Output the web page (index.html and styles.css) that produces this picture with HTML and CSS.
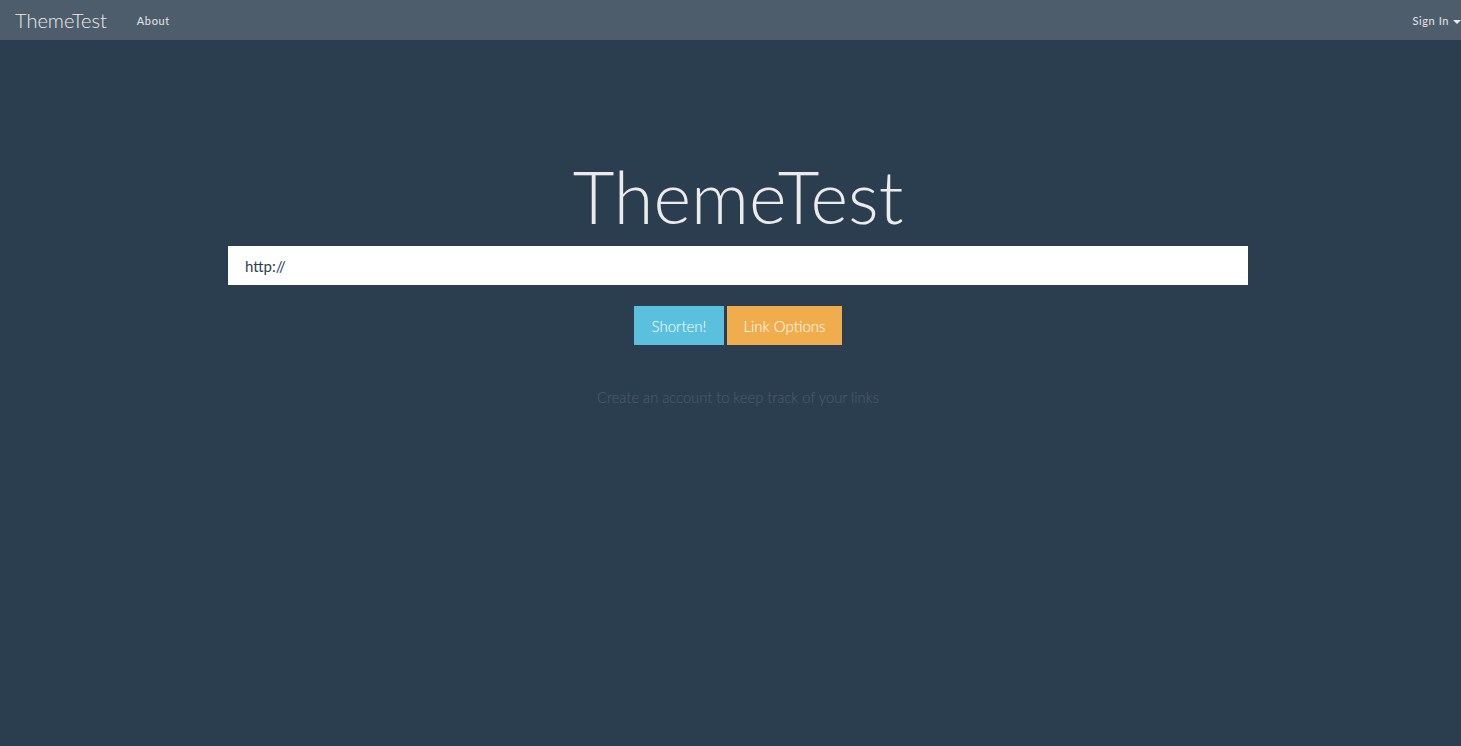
FILE: index.html
```html
<!DOCTYPE html>
<html lang="en">
<head>
    <meta charset="UTF-8">
    <meta name="viewport" content="width=device-width, initial-scale=1.0">
    <title>ThemeTest</title>
    <link rel="stylesheet" href="styles.css">
</head>
<body>
    <nav class="navbar">
        <a class="brand" href="#">ThemeTest</a>
        <ul class="nav">
            <li><a href="#">About</a></li>
        </ul>
        <ul class="nav nav-right">
            <li><a href="#">Sign In<span class="caret"></span></a></li>
        </ul>
    </nav>

    <div class="wrapper">
        <div class="container">
            <h1>ThemeTest</h1>
            <form id="shortenForm">
                <input type="text" class="url-input" value="http://">
                <div class="actions">
                    <button type="submit" class="btn btn-info">Shorten!</button>
                    <button type="button" class="btn btn-warning">Link Options</button>
                </div>
            </form>
            <p class="hint">Create an account to keep track of your links</p>
        </div>
    </div>
</body>
</html>
```

FILE: styles.css
```css
body {
    font-family: Lato, "Open Sans", sans-serif;
    font-weight: 300;
    margin: 0;
    padding: 0;
    background-color: #2b3e50;
    color: #ebebeb;
}

a {
    color: inherit;
    text-decoration: none;
}

.navbar {
    display: flex;
    align-items: center;
    height: 40px;
    background-color: #4e5d6c;
}

.brand {
    padding: 0 15px;
    font-size: 20px;
    line-height: 40px;
    color: #ebebeb;
}

.nav {
    display: flex;
    list-style: none;
    margin: 0;
    padding: 0;
}

.nav a {
    display: block;
    font-size: 11px;
    font-weight: 400;
    letter-spacing: 0.6px;
    line-height: 40px;
    padding: 1px 15px 0;
    color: #e6e6e6;
}

.nav-right {
    margin-left: auto;
}

.nav-right a {
    padding: 1px 0 0 15px;
}

.caret {
    display: inline-block;
    width: 0;
    height: 0;
    margin-left: 4px;
    vertical-align: 1px;
    border-top: 4px solid #ebebeb;
    border-left: 4px solid transparent;
    border-right: 4px solid transparent;
}

.wrapper {
    padding-left: 15px;
}

.container {
    width: 1020px;
    margin: 0 auto;
    padding-top: 106px;
    text-align: center;
}

h1 {
    font-size: 72px;
    font-weight: 300;
    line-height: 100px;
    margin: 0;
}

.url-input {
    display: block;
    box-sizing: border-box;
    width: 100%;
    height: 39px;
    padding: 0 17px;
    border: none;
    font-family: Lato, sans-serif;
    font-weight: 400;
    font-size: 15px;
    color: #2b3e50;
    background-color: white;
}

.actions {
    display: flex;
    justify-content: center;
    gap: 3px;
    margin-top: 21px;
}

.btn {
    height: 39px;
    padding: 0 17.5px;
    border: none;
    font-family: Lato, sans-serif;
    font-weight: 300;
    font-size: 15px;
    color: white;
    cursor: pointer;
}

.btn-info {
    background-color: #5bc0de;
}

.btn-warning {
    padding: 0 16.5px;
    background-color: #f0ad4e;
}

.hint {
    margin: 43px 0 0;
    font-size: 14.7px;
    color: #4e5d6c;
}
```
